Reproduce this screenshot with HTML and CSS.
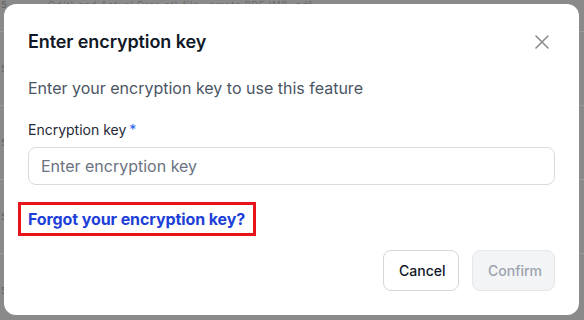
FILE: index.html
```html
<!DOCTYPE html>
<html>
<head>
<meta charset="utf-8">
<link rel="stylesheet" href="styles.css">
</head>
<body>
<div class="backdrop">
  <div class="bg-table">
    <div class="bg-head"><span class="bg-num">5</span><span class="bg-title">Od(t) and Actual Drsa.ct) file...arrate PDF IMB .pdf</span></div>
    <div class="bg-row"><span class="bg-num">5</span></div>
    <div class="bg-row"><span class="bg-num">5</span></div>
    <div class="bg-row"><span class="bg-num">5</span></div>
    <div class="bg-row"><span class="bg-num">5</span></div>
  </div>
  <div class="modal">
    <div class="modal-header">
      <h2 class="modal-title">Enter encryption key</h2>
      <button class="close-btn" aria-label="Close">
        <svg width="14" height="14" viewBox="0 0 14 14"><path d="M1 1L13 13M13 1L1 13" stroke="#8b8b8b" stroke-width="1.6" stroke-linecap="round"/></svg>
      </button>
    </div>
    <p class="modal-desc">Enter your encryption key to use this feature</p>
    <label class="field-label">Encryption key<span class="req">*</span></label>
    <input class="field-input" type="text" placeholder="Enter encryption key">
    <div class="link-row"><a class="forgot-link">Forgot your encryption key?</a></div>
    <div class="actions">
      <button class="btn btn-cancel">Cancel</button>
      <button class="btn btn-confirm" disabled>Confirm</button>
    </div>
  </div>
</div>
</body>
</html>
```
FILE: styles.css
```css
* { box-sizing: border-box; }
html, body { margin: 0; padding: 0; }
body {
  width: 584px;
  height: 320px;
  overflow: hidden;
  font-family: Inter, "Noto Sans", sans-serif;
  background: #8a8a8a;
}
.backdrop {
  position: relative;
  width: 584px;
  height: 320px;
  padding: 4px 5px 5px 4px;
}
.bg-table {
  position: absolute;
  inset: 0;
  color: #5e5e5e;
  font-size: 9px;
}
.bg-head {
  height: 32px;
  border-bottom: 1px solid #9a9a9a;
  line-height: 9px;
}
.bg-row {
  height: 74px;
  border-bottom: 1px solid #9a9a9a;
  line-height: 74px;
}
.bg-num { display: inline-block; width: 48px; padding-left: 1px; }
.bg-title { color: #6a6a6a; letter-spacing: 1px; }
.modal {
  position: relative;
  width: 575px;
  height: 311px;
  background: #fff;
  border-radius: 12px;
  padding: 24px;
  display: flex;
  flex-direction: column;
}
.modal-header {
  display: flex;
  align-items: center;
  justify-content: space-between;
  height: 28px;
}
.modal-title {
  margin: 0;
  font-size: 18px;
  font-weight: 600;
  line-height: 28px;
  color: #111827;
  letter-spacing: -0.1px;
}
.close-btn {
  border: 0;
  background: none;
  padding: 0;
  margin-right: 6px;
  width: 14px;
  height: 14px;
  display: flex;
}
.modal-desc {
  margin: 20px 0 0 0;
  font-size: 16px;
  line-height: 24px;
  color: #4b5563;
}
.field-label {
  margin-top: 20px;
  font-size: 14px;
  line-height: 20px;
  color: #1f2937;
}
.req { color: #2563eb; margin-left: 3px; }
.field-input {
  margin-top: 7px;
  height: 38px;
  width: 100%;
  border: 1px solid #d9dbe0;
  border-radius: 8px;
  padding: 0 12px;
  font-family: inherit;
  font-size: 16px;
  color: #111827;
  outline: none;
}
.field-input::placeholder { color: #6b7280; }
.link-row { margin-top: 17px; display: flex; }
.forgot-link {
  display: inline-block;
  margin-left: -10px;
  border: 3px solid #e8141c;
  padding: 3px 8px 3px 7px;
  font-size: 16px;
  font-weight: 700;
  line-height: 22px;
  letter-spacing: -0.1px;
  color: #1d3fd8;
  cursor: pointer;
}
.actions {
  margin-top: auto;
  display: flex;
  justify-content: flex-end;
  gap: 13px;
}
.btn {
  height: 41px;
  border-radius: 8px;
  font-family: inherit;
  font-size: 14px;
  font-weight: 500;
  padding: 0 15px;
}
.btn-cancel {
  background: #fff;
  border: 1px solid #d4d6da;
  color: #111827;
  width: 76px;
}
.btn-confirm {
  background: #f3f4f6;
  border: 1px solid #e5e7eb;
  color: #9ca3af;
  width: 83px;
}
```
